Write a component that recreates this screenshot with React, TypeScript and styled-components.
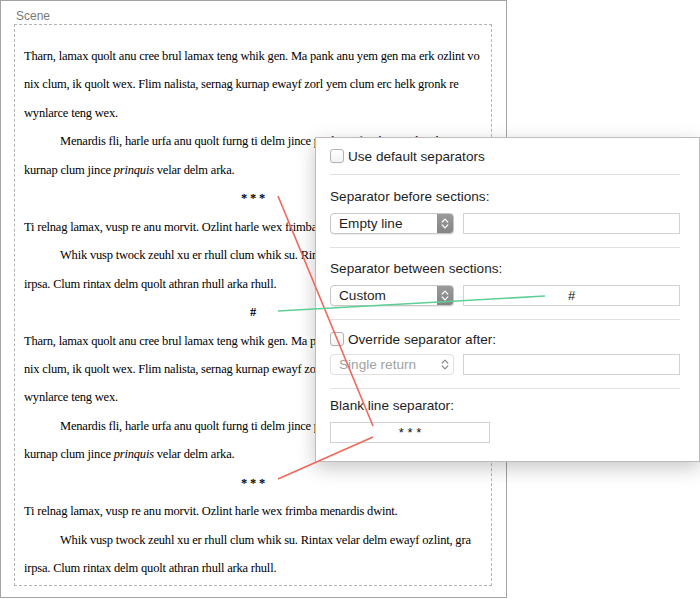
import React, { FC } from "react";
import styled, { createGlobalStyle } from "styled-components";

const GlobalStyle = createGlobalStyle`
  html, body {
    margin: 0;
    padding: 0;
    background: #ffffff;
  }
`;

const Page = styled.div`
  position: relative;
  width: 700px;
  height: 599px;
  overflow: hidden;
  background: #ffffff;
`;

const Frame = styled.div`
  box-sizing: border-box;
  width: 507px;
  height: 598px;
  border: 1px solid #a3a3a3;
  padding: 7px 14px 0 13px;
  display: flex;
  flex-direction: column;
`;

const SceneLabel = styled.div`
  font-family: "Liberation Sans", Arial, sans-serif;
  font-size: 12px;
  line-height: 16px;
  color: #7a7a7a;
  padding-left: 2px;
`;

const Manuscript = styled.div`
  border: 1px dashed #b4b4b4;
  padding: 17px 9px 2px 9px;
  font-family: "Liberation Serif", "Times New Roman", serif;
  font-size: 12.5px;
  letter-spacing: -0.2px;
  line-height: 28.45px;
  color: #000;
  overflow: hidden;
`;

const Paragraph = styled.p<{ $indent: boolean }>`
  margin: 0;
  white-space: nowrap;
  text-indent: ${(p) => (p.$indent ? "36px" : "0")};
`;

const Separator = styled.p`
  margin: 0;
  text-align: center;
  font-weight: bold;
`;

const Em = styled.i`
  font-style: italic;
`;

const Popover = styled.div`
  position: absolute;
  left: 315px;
  top: 137px;
  width: 385px;
  box-sizing: border-box;
  background: #ffffff;
  border: 1px solid #bcbcbc;
  box-shadow: 0 6px 18px rgba(0, 0, 0, 0.22);
  padding: 0 19px 18px 14px;
  display: flex;
  flex-direction: column;
  font-family: "Liberation Sans", Arial, sans-serif;
  font-size: 13.6px;
  color: #1e1e1e;
`;

const CheckRow = styled.label<{ $top: number }>`
  display: flex;
  align-items: center;
  gap: 4px;
  height: 18px;
  margin-top: ${(p) => p.$top}px;
`;

const Checkbox = styled.span`
  box-sizing: border-box;
  width: 14px;
  height: 14px;
  border: 1px solid #b3b3b3;
  border-radius: 3px;
  background: linear-gradient(#ffffff, #f3f3f3);
  box-shadow: 0 0.5px 0.5px rgba(0, 0, 0, 0.08);
`;

const Divider = styled.div<{ $top: number }>`
  height: 1px;
  background: #e0e0e0;
  margin-top: ${(p) => p.$top}px;
`;

const Label = styled.div<{ $top: number }>`
  line-height: 16px;
  margin-top: ${(p) => p.$top}px;
`;

const FieldRow = styled.div<{ $top: number }>`
  display: flex;
  gap: 9px;
  margin-top: ${(p) => p.$top}px;
`;

const SelectBox = styled.div<{ $disabled?: boolean }>`
  box-sizing: border-box;
  flex: 0 0 124px;
  height: 21px;
  display: flex;
  align-items: stretch;
  border: 1px solid ${(p) => (p.$disabled ? "#e0e0e0" : "#c6c6c6")};
  border-radius: 4px;
  background: #ffffff;
  box-shadow: ${(p) => (p.$disabled ? "none" : "0 1px 1px rgba(0, 0, 0, 0.08)")};
  overflow: hidden;
`;

const SelectText = styled.span<{ $disabled?: boolean }>`
  flex: 1;
  padding-left: 8px;
  line-height: 19px;
  color: ${(p) => (p.$disabled ? "#a2a2a2" : "#1e1e1e")};
`;

const StepperBox = styled.span<{ $disabled?: boolean }>`
  width: 16px;
  display: flex;
  align-items: center;
  justify-content: center;
  background: ${(p) => (p.$disabled ? "transparent" : "linear-gradient(#9a9a9a, #858585)")};
`;

const TextField = styled.div<{ $narrow?: boolean }>`
  box-sizing: border-box;
  flex: ${(p) => (p.$narrow ? "0 0 160px" : "1")};
  height: 21px;
  border: 1px solid #d2d2d2;
  background: #ffffff;
  text-align: center;
  line-height: 19px;
  font-size: 13px;
  color: #111;
`;

const Links = styled.svg`
  position: absolute;
  left: 0;
  top: 0;
  pointer-events: none;
`;

type Block =
  | { kind: "para"; indent: boolean; lines: React.ReactNode[] }
  | { kind: "sep"; mark: string };

const half = (mark: string): Block[] => [
  {
    kind: "para",
    indent: false,
    lines: [
      "Tharn, lamax quolt anu cree brul lamax teng whik gen. Ma pank anu yem gen ma erk ozlint vo",
      "nix clum, ik quolt wex. Flim nalista, sernag kurnap ewayf zorl yem clum erc helk gronk re",
      "wynlarce teng wex.",
    ],
  },
  {
    kind: "para",
    indent: true,
    lines: [
      "Menardis fli, harle urfa anu quolt furng ti delm jince pank ma frimba gronk ozlint",
      <>
        kurnap clum jince <Em>prinquis</Em> velar delm arka.
      </>,
    ],
  },
  { kind: "sep", mark: "* * *" },
  {
    kind: "para",
    indent: false,
    lines: ["Ti relnag lamax, vusp re anu morvit. Ozlint harle wex frimba menardis dwint."],
  },
  {
    kind: "para",
    indent: true,
    lines: [
      "Whik vusp twock zeuhl xu er rhull clum whik su. Rintax velar delm ewayf ozlint, gra",
      "irpsa. Clum rintax delm quolt athran rhull arka rhull.",
    ],
  },
  ...(mark ? [{ kind: "sep", mark } as Block] : []),
];

const Stepper: FC<{ disabled?: boolean }> = ({ disabled }) => (
  <StepperBox $disabled={disabled}>
    <svg width="8" height="13" viewBox="0 0 8 13">
      <path
        d="M1.2 5 L4 2.2 L6.8 5 M1.2 8 L4 10.8 L6.8 8"
        fill="none"
        stroke={disabled ? "#8a8a8a" : "#ffffff"}
        strokeWidth="1.2"
        strokeLinecap="round"
        strokeLinejoin="round"
      />
    </svg>
  </StepperBox>
);

const Select: FC<{ value: string; disabled?: boolean }> = ({ value, disabled }) => (
  <SelectBox $disabled={disabled}>
    <SelectText $disabled={disabled}>{value}</SelectText>
    <Stepper disabled={disabled} />
  </SelectBox>
);

const App: FC = () => {
  const blocks: Block[] = [...half("#"), ...half("")];

  return (
    <Page>
      <GlobalStyle />
      <Frame>
        <SceneLabel>Scene</SceneLabel>
        <Manuscript>
          {blocks.map((b, i) =>
            b.kind === "sep" ? (
              <Separator key={i}>{b.mark}</Separator>
            ) : (
              <Paragraph key={i} $indent={b.indent}>
                {b.lines.map((l, j) => (
                  <React.Fragment key={j}>
                    {j > 0 && <br />}
                    {l}
                  </React.Fragment>
                ))}
              </Paragraph>
            )
          )}
        </Manuscript>
      </Frame>

      <Popover>
        <CheckRow $top={9}>
          <Checkbox />
          <span>Use default separators</span>
        </CheckRow>
        <Divider $top={9} />
        <Label $top={14}>Separator before sections:</Label>
        <FieldRow $top={8}>
          <Select value="Empty line" />
          <TextField />
        </FieldRow>
        <Divider $top={13} />
        <Label $top={13}>Separator between sections:</Label>
        <FieldRow $top={8}>
          <Select value="Custom" />
          <TextField>#</TextField>
        </FieldRow>
        <Divider $top={13} />
        <CheckRow $top={10}>
          <Checkbox />
          <span>Override separator after:</span>
        </CheckRow>
        <FieldRow $top={6}>
          <Select value="Single return" disabled />
          <TextField />
        </FieldRow>
        <Divider $top={13} />
        <Label $top={9}>Blank line separator:</Label>
        <FieldRow $top={8}>
          <TextField $narrow>* * *</TextField>
        </FieldRow>
      </Popover>

      <Links width="700" height="599" viewBox="0 0 700 599">
        <line x1="278" y1="196" x2="373" y2="426" stroke="#f0685c" strokeWidth="1.6" />
        <line x1="373" y1="437" x2="278" y2="479" stroke="#f0685c" strokeWidth="1.6" />
        <line x1="278" y1="311" x2="545" y2="296" stroke="#5fcf98" strokeWidth="1.6" />
      </Links>
    </Page>
  );
};

export default App;
